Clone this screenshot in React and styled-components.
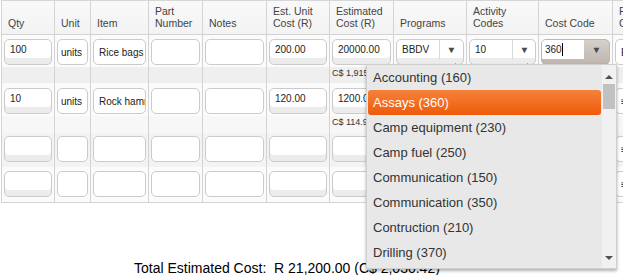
import React from 'react';
import styled, { createGlobalStyle } from 'styled-components';

const COLS = '53px 36px 58px 54px 64px 63px 64px 73px 72px 74px 60px';

const GlobalStyle = createGlobalStyle`
  html, body { margin: 0; padding: 0; background: #fff; overflow: hidden; }
  body { font-family: "Liberation Sans", Arial, sans-serif; color: #222; }
`;

const headers = [
  'Qty',
  'Unit',
  'Item',
  'Part Number',
  'Notes',
  'Est. Unit Cost (R)',
  'Estimated Cost (R)',
  'Programs',
  'Activity Codes',
  'Cost Code',
  'Funding Code',
];

const costCodes = [
  'Accounting (160)',
  'Assays (360)',
  'Camp equipment (230)',
  'Camp fuel (250)',
  'Communication (150)',
  'Communication (350)',
  'Contruction (210)',
  'Drilling (370)',
];

const rows = [
  { qty: '100', unit: 'units', item: 'Rice bags', unitCost: '200.00', cost: '20000.00', program: 'BBDV', activity: '10', fund: 'EXP', conv: 'C$ 1,915.49', h: 32, pt: 4, tone: '#fbfbfb' },
  { qty: '10', unit: 'units', item: 'Rock hammers', unitCost: '120.00', cost: '1200.00', program: 'BBDV', activity: '10', fund: '≡', conv: 'C$ 114.93', h: 33, pt: 5, tone: '#fbfbfb' },
  { h: 34, pt: 3, tone: '#f3f3f3', fund: '≡' },
  { h: 35, pt: 4, tone: '#fbfbfb', fund: '≡' },
];

export default function App() {
  return (
    <>
      <GlobalStyle />
      <Page>
        <Table>
          <HeadRow>
            {headers.map((h) => (
              <HeadCell key={h}>{h}</HeadCell>
            ))}
          </HeadRow>

          {rows.map((r, i) => (
            <React.Fragment key={i}>
              <Row $h={r.h} $tone={r.tone}>
                <Cell $pt={r.pt}><Field $band readOnly defaultValue={r.qty || ''} /></Cell>
                <Cell $pt={r.pt}><Field $tight readOnly defaultValue={r.unit || ''} /></Cell>
                <Cell $pt={r.pt}><Field readOnly defaultValue={r.item || ''} /></Cell>
                <Cell $pt={r.pt}><Field readOnly defaultValue="" /></Cell>
                <Cell $pt={r.pt}><Field readOnly defaultValue="" /></Cell>
                <Cell $pt={r.pt}><Field $band readOnly defaultValue={r.unitCost || ''} /></Cell>
                <Cell $pt={r.pt}><Field $band readOnly defaultValue={r.cost || ''} /></Cell>
                <Cell $pt={r.pt}>
                  {r.program ? (
                    <Select value={r.program} split={43} />
                  ) : (
                    <Field $band readOnly defaultValue="" />
                  )}
                </Cell>
                <Cell $pt={r.pt}>
                  {r.activity ? (
                    <Select value={r.activity} split={43} />
                  ) : (
                    <Field $band readOnly defaultValue="" />
                  )}
                </Cell>
                <Cell $pt={r.pt}>
                  {i === 0 ? (
                    <SelectBox $focused>
                      <FocusText>
                        360<Caret />
                      </FocusText>
                      <Arrow>
                        <ArrowGlyph>▼</ArrowGlyph>
                        <Dot />
                      </Arrow>
                    </SelectBox>
                  ) : (
                    <Field $band readOnly defaultValue="" />
                  )}
                </Cell>
                <Cell $pt={r.pt}>
                  <Field readOnly defaultValue={r.fund || ''} />
                </Cell>
              </Row>
              {r.conv && (
                <Row $h={i === 0 ? 16 : 17} $tone={i === 0 ? '#efefef' : '#f7f7f7'}>
                  {headers.map((h, c) => (
                    <Cell key={h} $pt={0}>
                      {c === 6 && <Conv>{r.conv}</Conv>}
                    </Cell>
                  ))}
                </Row>
              )}
            </React.Fragment>
          ))}
        </Table>

        <Total>
          Total Estimated Cost:&nbsp; R 21,200.00 (C$ 2,030.42)
        </Total>

        <Menu>
          <MenuList>
            {costCodes.map((c) => (
              <MenuItem key={c} $active={c.startsWith('Assays')}>
                {c}
              </MenuItem>
            ))}
          </MenuList>
          <ScrollTrack>
            <ScrollArrow $up />
            <Thumb />
            <Spacer />
            <ScrollArrow />
          </ScrollTrack>
        </Menu>
      </Page>
    </>
  );
}

const Select = ({ value, split }) => (
  <SelectBox>
    <SelectText style={{ width: split }}>{value}</SelectText>
    <Arrow>
      <ArrowGlyph>▼</ArrowGlyph>
      <Dot />
    </Arrow>
  </SelectBox>
);

const Page = styled.div`
  position: relative;
  width: 623px;
  height: 275px;
  overflow: hidden;
  padding-left: 1px;
  box-sizing: border-box;
`;

const Table = styled.div`
  width: max-content;
  border-top: 1px solid #d6d6d6;
  border-bottom: 1px solid #d3d3d3;
`;

const HeadRow = styled.div`
  display: grid;
  grid-template-columns: ${COLS};
  height: 33px;
  border-bottom: 1px solid #d3d3d3;
  background: linear-gradient(#f9f9f9, #f3f3f3);
`;

const HeadCell = styled.div`
  display: flex;
  align-items: flex-end;
  border-left: 1px solid #d3d3d3;
  padding: 0 5px 5px 6px;
  font-size: 10.5px;
  line-height: 11.5px;
  color: #444;
`;

const Row = styled.div`
  display: grid;
  grid-template-columns: ${COLS};
  height: ${(p) => p.$h}px;
  background: ${(p) => p.$tone};
`;

const Cell = styled.div`
  position: relative;
  border-left: 1px solid #d3d3d3;
  padding: ${(p) => p.$pt}px 2px 0 2px;
  box-sizing: border-box;
  min-width: 0;
`;

const Field = styled.input`
  display: block;
  width: 100%;
  height: 26px;
  box-sizing: border-box;
  margin: 0;
  border: 1px solid #cbcbcb;
  border-radius: 5px;
  padding: 0 0 ${(p) => (p.$band ? '5px' : '0')} ${(p) => (p.$tight ? '3px' : '5px')};
  background: #fff;
  box-shadow: ${(p) => (p.$band ? 'inset 0 -6px 0 #ececec' : 'none')};
  font-family: "Liberation Sans", Arial, sans-serif;
  font-size: 10px;
  color: #222;
  outline: none;
`;

const SelectBox = styled.div`
  display: flex;
  height: 26px;
  box-sizing: border-box;
  border: 1px solid ${(p) => (p.$focused ? '#bdb5ae' : '#cbcbcb')};
  border-radius: 5px;
  overflow: hidden;
  background: ${(p) =>
    p.$focused
      ? 'linear-gradient(#d6d0cb, #beb5ae)'
      : 'linear-gradient(#fff 0, #fff 76%, #ececec 77%)'};
`;

const SelectText = styled.div`
  height: 19px;
  line-height: 19px;
  padding-left: 5px;
  box-sizing: border-box;
  border-right: 1px solid #dadada;
  font-size: 10px;
  color: #222;
`;

const FocusText = styled.div`
  width: 42px;
  height: 19px;
  line-height: 19px;
  padding-left: 3px;
  box-sizing: border-box;
  background: #fff;
  font-size: 10px;
  color: #222;
  display: flex;
  align-items: center;
`;

const Caret = styled.span`
  display: inline-block;
  width: 1px;
  height: 13px;
  background: #000;
`;

const Arrow = styled.div`
  position: relative;
  flex: 1;
  height: 19px;
  display: flex;
  align-items: center;
  justify-content: center;
`;

const ArrowGlyph = styled.span`
  font-size: 9px;
  color: #4a4a4a;
  transform: scaleX(1.1);
`;

const Dot = styled.span`
  position: absolute;
  right: 7px;
  bottom: -5px;
  width: 1px;
  height: 1px;
  background: #aaa;
`;

const Conv = styled.div`
  position: absolute;
  left: 2px;
  top: 0;
  line-height: 13px;
  font-size: 9px;
  color: #333;
  white-space: nowrap;
`;

const Total = styled.div`
  margin-top: 57px;
  padding-left: 133px;
  font-size: 14px;
  line-height: 16px;
  color: #000;
  white-space: nowrap;
`;

const Menu = styled.div`
  position: absolute;
  left: 366px;
  top: 64px;
  width: 251px;
  height: 205px;
  box-sizing: border-box;
  display: flex;
  background: #e8e8e8;
  border: 1px solid #cfcfcf;
  box-shadow: 0 2px 3px rgba(0, 0, 0, 0.3);
`;

const MenuList = styled.div`
  flex: 1;
  padding: 0 1px;
`;

const MenuItem = styled.div`
  height: 25px;
  line-height: 25px;
  padding-left: 5px;
  border-radius: 3px;
  font-size: 13px;
  color: ${(p) => (p.$active ? '#fff' : '#333')};
  background: ${(p) =>
    p.$active ? 'linear-gradient(#f5823a, #ef5a0a)' : 'transparent'};
  white-space: nowrap;
`;

const ScrollTrack = styled.div`
  width: 14px;
  display: flex;
  flex-direction: column;
  align-items: center;
  background: #f1f1f1;
`;

const ScrollArrow = styled.div`
  width: 0;
  height: 0;
  margin: ${(p) => (p.$up ? '10px 0 5px' : '0 0 8px')};
  border-left: 4px solid transparent;
  border-right: 4px solid transparent;
  ${(p) =>
    p.$up ? 'border-bottom: 4px solid #505050;' : 'border-top: 4px solid #505050;'}
`;

const Thumb = styled.div`
  width: 12px;
  height: 25px;
  background: #c1c1c1;
`;

const Spacer = styled.div`
  flex: 1;
`;
